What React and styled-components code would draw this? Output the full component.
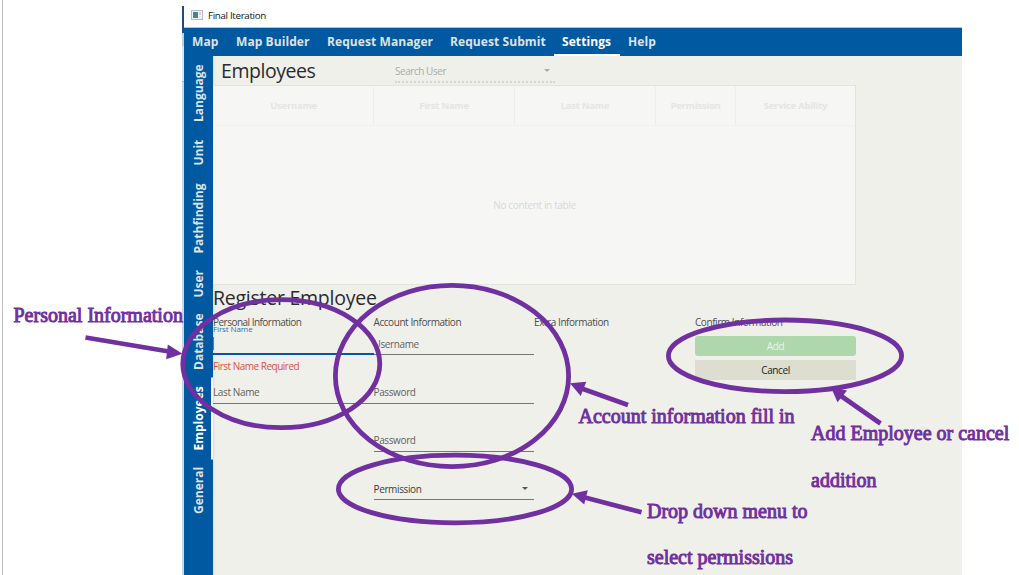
import React from 'react';
import styled, { createGlobalStyle, css } from 'styled-components';

const purple = '#7030a0';
const blue = '#0059a1';

const Global = createGlobalStyle`
  * { box-sizing: border-box; }
  html, body { margin: 0; background: #fff; }
  body { overflow: hidden; font-family: 'Open Sans', 'Noto Sans', sans-serif; }
`;

const Page = styled.div`
  position: relative;
  display: flex;
  width: 1019px;
  height: 575px;
  overflow: hidden;
  background: #fff;
`;

const Margin = styled.div`
  flex: none;
  width: 180px;
  margin-left: 2px;
  border-left: 1px solid #bfbfbf;
`;

const WindowEdge = styled.div`
  flex: none;
  width: 2px;
  margin-top: 6px;
  background: linear-gradient(to bottom, #1c4b8c 0 27px, #c9cdd2 27px 40px, #e3e3e3 40px 75px, #b4b8bc 75px 76px, #d3d7da 76px);
`;

const Window = styled.div`
  display: flex;
  flex-direction: column;
  width: 778px;
  height: 575px;
`;

const TitleBar = styled.div`
  display: flex;
  align-items: center;
  gap: 5px;
  height: 28px;
  padding: 3px 0 0 7px;
  border-bottom: 1px solid #a9c6e0;
  font-size: 9.8px;
  letter-spacing: -0.34px;
  color: #111;
`;

const TopNav = styled.nav`
  display: flex;
  height: 28px;
  background: ${blue};
`;

const tabText = css`
  font-size: 12px;
  font-weight: 700;
  color: ${(p) => (p.$active ? '#fff' : '#dde3e8')};
`;

const TopTab = styled.div`
  ${tabText}
  width: ${(p) => p.$w}px;
  height: 28px;
  line-height: 28px;
  padding-left: 8px;
  letter-spacing: 0.08px;
  white-space: nowrap;
  border-bottom: 2px solid ${(p) => (p.$active ? '#fff' : 'transparent')};
`;

const Body = styled.div`
  display: flex;
  flex: 1;
  min-height: 0;
`;

const SideNav = styled.nav`
  display: flex;
  flex-direction: column;
  width: 29px;
  background: ${blue};
`;

const SideTab = styled.div`
  ${tabText}
  display: flex;
  align-items: center;
  justify-content: center;
  height: ${(p) => p.$h}px;
  width: 29px;
  padding-right: 2px;
  writing-mode: vertical-rl;
  transform: rotate(180deg);
  border-left: 2px solid ${(p) => (p.$active ? '#fff' : 'transparent')};
  line-height: 25px;
  white-space: nowrap;
`;

const Content = styled.main`
  display: flex;
  flex-direction: column;
  flex: 1;
  background: #f0f0eb;
  box-shadow: inset 3px 0 3px -2px rgba(0, 0, 0, 0.07);
`;

const Header = styled.div`
  display: flex;
  align-items: flex-start;
  height: 29px;
  padding-left: 8px;
`;

const Heading = styled.h1`
  margin: 0;
  width: ${(p) => p.$w || 'auto'};
  font-size: 19.5px;
  font-weight: 400;
  height: ${(p) => p.$h}px;
  line-height: ${(p) => p.$h}px;
  letter-spacing: ${(p) => p.$ls}px;
  color: #2b2b2b;
  white-space: nowrap;
`;

const Search = styled.div`
  display: flex;
  align-items: center;
  justify-content: space-between;
  width: 160px;
  height: 27px;
  padding: 4px 5px 0 0;
  border-bottom: 2px dotted #d6d6d1;
  font-size: 10px;
  letter-spacing: -0.45px;
  color: #aaaaa7;
`;

const Caret = styled.span`
  border: 3.5px solid transparent;
  border-top-color: ${(p) => p.$color};
  border-bottom: 0;
`;

const Table = styled.section`
  display: flex;
  flex-direction: column;
  width: 643px;
  height: 200px;
  background: #f6f6f4;
  border: 1px solid #e3e3e0;
  border-left-color: #f0f0ed;
`;

const Columns = styled.div`
  display: grid;
  grid-template-columns: 160px 141px 141px 80px 1fr;
  height: 40px;
  border-bottom: 1px solid #f0f0ee;
`;

const Column = styled.div`
  text-align: center;
  line-height: 39px;
  font-size: 9.5px;
  font-weight: 700;
  letter-spacing: -0.26px;
  color: #e5e5e3;
  border-right: 1px solid #eeeeec;
  &:last-child { border-right: 0; }
`;

const Empty = styled.div`
  flex: 1;
  display: flex;
  align-items: center;
  justify-content: center;
  font-size: 10px;
  letter-spacing: -0.35px;
  color: #d9d9d7;
`;

const Form = styled.div`
  display: grid;
  grid-template-columns: 160.5px 160.5px 161px 161px;
  width: 643px;
  padding-top: 5px;
`;

const Group = styled.div`
  display: flex;
  flex-direction: column;
`;

const GroupTitle = styled.div`
  height: 14px;
  line-height: 14px;
  margin-bottom: 5px;
  font-size: 10px;
  letter-spacing: ${(p) => p.$ls || -0.43}px;
  color: #4c4c4a;
  white-space: nowrap;
`;

const Field = styled.div`
  position: relative;
  display: flex;
  align-items: center;
  justify-content: space-between;
  height: 21.3px;
  margin-bottom: 27px;
  padding: 0 6px 1px 0;
  font-size: 10px;
  letter-spacing: -0.37px;
  color: ${(p) => (p.$dark ? '#3a3a38' : '#62625f')};
  border-bottom: ${(p) => (p.$focus ? `2px solid ${blue}` : '1px solid #767672')};
`;

const FloatLabel = styled.span`
  position: absolute;
  top: -11px;
  left: 0;
  font-size: 8px;
  line-height: 12px;
  letter-spacing: -0.1px;
  color: #2a72ae;
`;

const TextCursor = styled.span`
  width: 1px;
  height: 13px;
  background: #777;
`;

const ErrorText = styled.span`
  position: absolute;
  top: 24px;
  left: 0;
  line-height: 16px;
  letter-spacing: -0.5px;
  color: #dc4f45;
  white-space: nowrap;
`;

const Actions = styled.div`
  display: flex;
  flex-direction: column;
  gap: 4px;
  padding-top: 2px;
`;

const Button = styled.button`
  height: 20px;
  padding: 0;
  border: 0;
  border-radius: ${(p) => (p.$primary ? 3 : 0)}px;
  background: ${(p) => (p.$primary ? '#aed7ae' : '#ddddd0')};
  color: ${(p) => (p.$primary ? '#eaf5e8' : '#1c1c1a')};
  font: 10px/20px 'Open Sans', sans-serif;
  letter-spacing: -0.4px;
`;

const Annotations = styled.svg`
  position: absolute;
  inset: 0;
  fill: none;
  stroke: ${purple};
  stroke-width: 4.8;
`;

const Caption = styled.p`
  position: absolute;
  left: ${(p) => p.$x}px;
  top: ${(p) => p.$y}px;
  margin: 0;
  font: 20px/46.8px 'Liberation Serif', serif;
  color: ${purple};
  -webkit-text-stroke: 0.95px ${purple};
  white-space: pre-line;
`;

const AppIcon = () => (
  <svg width="12" height="10" viewBox="0 0 12 10">
    <defs>
      <linearGradient id="pane" x1="0" y1="0" x2="0.4" y2="1">
        <stop offset="0" stopColor="#3f7fa8" />
        <stop offset="1" stopColor="#3f8f72" />
      </linearGradient>
    </defs>
    <rect x="0.5" y="0.5" width="11" height="9" fill="#f3f5f7" stroke="#b5bcc3" />
    <rect x="2" y="2" width="5" height="6" fill="url(#pane)" />
    <rect x="8" y="2" width="2" height="3" fill="#cfd5da" />
    <rect x="8" y="6" width="2" height="2" fill="#e1e5e8" />
  </svg>
);

const topTabs = [
  ['Map', 44], ['Map Builder', 91], ['Request Manager', 123],
  ['Request Submit', 112], ['Settings', 66], ['Help', 45],
];

const sideTabs = [
  ['Language', 75], ['Unit', 43.5], ['Pathfinding', 87.5], ['User', 43.5],
  ['Database', 72], ['Employees', 81.5], ['General', 63],
];

const columns = ['Username', 'First Name', 'Last Name', 'Permission', 'Service Ability'];

export default function App() {
  return (
    <Page>
      <Global />
      <Margin />
      <WindowEdge />
      <Window>
        <TitleBar><AppIcon />Final Iteration</TitleBar>
        <TopNav>
          {topTabs.map(([name, w]) => (
            <TopTab key={name} $w={w} $active={name === 'Settings'}>{name}</TopTab>
          ))}
        </TopNav>
        <Body>
          <SideNav>
            {sideTabs.map(([name, h]) => (
              <SideTab key={name} $h={h} $active={name === 'Employees'}>{name}</SideTab>
            ))}
          </SideNav>
          <Content>
            <Header>
              <Heading $w="174px" $h={29} $ls={-0.45}>Employees</Heading>
              <Search>Search User<Caret $color="#aaaaa7" /></Search>
            </Header>
            <Table>
              <Columns>{columns.map((c) => <Column key={c}>{c}</Column>)}</Columns>
              <Empty>No content in table</Empty>
            </Table>
            <Heading $h={25} $ls={-0.25}>Register Employee</Heading>
            <Form>
              <Group>
                <GroupTitle $ls={-0.52}>Personal Information</GroupTitle>
                <Field $focus>
                  <FloatLabel>First Name</FloatLabel>
                  <TextCursor />
                  <ErrorText>First Name Required</ErrorText>
                </Field>
                <Field>Last Name</Field>
              </Group>
              <Group>
                <GroupTitle>Account Information</GroupTitle>
                <Field>Username</Field>
                <Field>Password</Field>
                <Field>Password</Field>
                <Field $dark>Permission<Caret $color="#555552" /></Field>
              </Group>
              <Group>
                <GroupTitle>Extra Information</GroupTitle>
              </Group>
              <Group>
                <GroupTitle>Confirm Information</GroupTitle>
                <Actions>
                  <Button $primary>Add</Button>
                  <Button>Cancel</Button>
                </Actions>
              </Group>
            </Form>
          </Content>
        </Body>
      </Window>
      <Annotations width="1019" height="575" viewBox="0 0 1019 575">
        <ellipse cx="281.3" cy="363.7" rx="98.5" ry="64" />
        <ellipse cx="452" cy="376" rx="116.6" ry="90.6" />
        <ellipse cx="455" cy="489" rx="116.6" ry="33.8" />
        <ellipse cx="785" cy="355.8" rx="116.6" ry="35.8" />
        <path d="M85.5 337.5L169 351.5M628 405L581 388.3M641.5 512.3L583 497M880.5 423.5L839 394.5" />
        <g fill={purple} stroke="none">
          <path d="M182.5 353.7L167.8 344.5L166.2 359.2Z" />
          <path d="M570 383.3L586.3 381.8L580.7 396Z" />
          <path d="M571.8 493.8L587.8 490.2L584.2 504.5Z" />
          <path d="M831 387.5L847 390.5L837.5 402.3Z" />
        </g>
      </Annotations>
      <Caption $x={13.5} $y={291.5}>Personal Information</Caption>
      <Caption $x={578.5} $y={392.5}>Account information fill in</Caption>
      <Caption $x={811} $y={410.3}>{'Add Employee or cancel\naddition'}</Caption>
      <Caption $x={647} $y={487.7}>{'Drop down menu to\nselect permissions'}</Caption>
    </Page>
  );
}
